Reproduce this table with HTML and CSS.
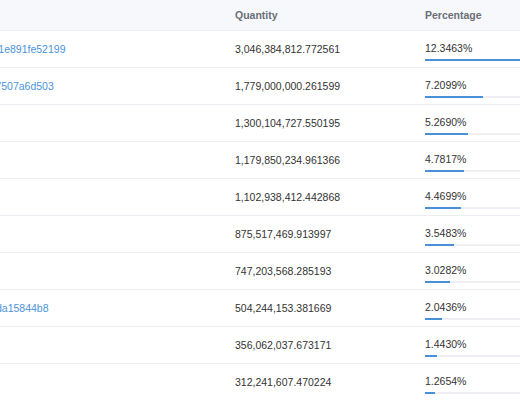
FILE: index.html
```html
<!DOCTYPE html>
<html lang="en">
<head>
<meta charset="utf-8">
<title>Token holders</title>
<link rel="stylesheet" href="styles.css">
</head>
<body>
<div class="viewport">
  <div class="holders">
    <div class="row head">
      <div class="cell addr">Address</div>
      <div class="cell qty">Quantity</div>
      <div class="cell pct">Percentage</div>
    </div>
    <div class="row">
      <div class="cell addr"><a href="#">0x3f5ce5fbfe3e9af3971dd833d26b1e891fe52199</a></div>
      <div class="cell qty">3,046,384,812.772561</div>
      <div class="cell pct"><span>12.3463%</span><div class="track"><div class="fill" style="width:100px"></div></div></div>
    </div>
    <div class="row">
      <div class="cell addr"><a href="#">0xa4d8b2e0c9371f526e0d94b8a37507a6d503</a></div>
      <div class="cell qty">1,779,000,000.261599</div>
      <div class="cell pct"><span>7.2099%</span><div class="track"><div class="fill" style="width:58px"></div></div></div>
    </div>
    <div class="row">
      <div class="cell addr">Binance</div>
      <div class="cell qty">1,300,104,727.550195</div>
      <div class="cell pct"><span>5.2690%</span><div class="track"><div class="fill" style="width:43px"></div></div></div>
    </div>
    <div class="row">
      <div class="cell addr">Huobi</div>
      <div class="cell qty">1,179,850,234.961366</div>
      <div class="cell pct"><span>4.7817%</span><div class="track"><div class="fill" style="width:39px"></div></div></div>
    </div>
    <div class="row">
      <div class="cell addr">OKEx</div>
      <div class="cell qty">1,102,938,412.442868</div>
      <div class="cell pct"><span>4.4699%</span><div class="track"><div class="fill" style="width:36px"></div></div></div>
    </div>
    <div class="row">
      <div class="cell addr">Bitfinex</div>
      <div class="cell qty">875,517,469.913997</div>
      <div class="cell pct"><span>3.5483%</span><div class="track"><div class="fill" style="width:29px"></div></div></div>
    </div>
    <div class="row">
      <div class="cell addr">Poloniex</div>
      <div class="cell qty">747,203,568.285193</div>
      <div class="cell pct"><span>3.0282%</span><div class="track"><div class="fill" style="width:25px"></div></div></div>
    </div>
    <div class="row">
      <div class="cell addr"><a href="#">0x9e3d2b41a70f6285e4d1b09327da15844b8</a></div>
      <div class="cell qty">504,244,153.381669</div>
      <div class="cell pct"><span>2.0436%</span><div class="track"><div class="fill" style="width:17px"></div></div></div>
    </div>
    <div class="row">
      <div class="cell addr">Kraken</div>
      <div class="cell qty">356,062,037.673171</div>
      <div class="cell pct"><span>1.4430%</span><div class="track"><div class="fill" style="width:12px"></div></div></div>
    </div>
    <div class="row">
      <div class="cell addr">Bittrex</div>
      <div class="cell qty">312,241,607.470224</div>
      <div class="cell pct"><span>1.2654%</span><div class="track"><div class="fill" style="width:10px"></div></div></div>
    </div>
  </div>
</div>
</body>
</html>
```

FILE: styles.css
```css
html, body {
  margin: 0;
  padding: 0;
  background: #ffffff;
}

body {
  font-family: "Liberation Sans", Arial, sans-serif;
  font-size: 10.5px;
  color: #333333;
}

.viewport {
  width: 520px;
  height: 400px;
  overflow: hidden;
}

.holders {
  width: 720px;
  margin-left: -174px;
}

.row {
  display: grid;
  grid-template-columns: 399px 190px 1fr;
  height: 36px;
  border-bottom: 1px solid #ebeef3;
}

.row.head {
  height: 30px;
  background: #f6f8fb;
  color: #6b6f76;
  font-weight: 700;
}

.cell {
  padding: 0 10px;
  display: flex;
  align-items: center;
  line-height: 14px;
  white-space: nowrap;
}

.addr a {
  color: #4a93dc;
  text-decoration: none;
}

.row:not(.head) .pct {
  flex-direction: column;
  align-items: flex-start;
  justify-content: flex-start;
  padding-top: 10px;
}

.track {
  width: 100px;
  height: 2px;
  margin-top: 4px;
  background: #eef0f4;
}

.fill {
  height: 2px;
  background: #4a90d9;
}
```
